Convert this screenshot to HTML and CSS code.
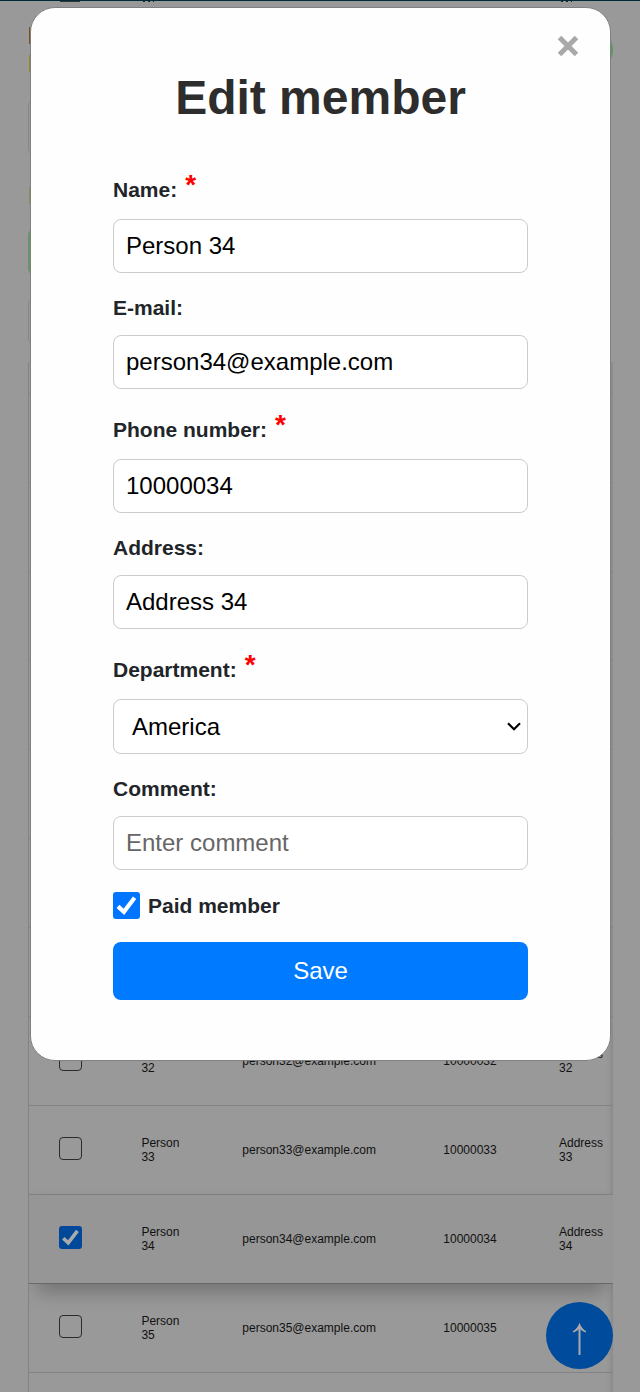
FILE: index.html
```html
<!DOCTYPE html>
<html lang="en">
<head>
<meta charset="utf-8">
<title>Edit member</title>
<link rel="stylesheet" href="styles.css">
</head>
<body>
<div class="page">
  <div class="topbar"></div>
  <div class="scrolled"><i class="edge box"></i><i class="edge digits"></i><i class="edge digits last"></i></div>
  <div class="toolbar">
    <div class="chips">
      <i class="chip orange"></i>
      <i class="chip yellow"></i>
      <i class="chip panel"></i>
      <i class="chip olive"></i>
      <i class="chip green"></i>
      <i class="chip panel-low"></i>
    </div>
    <i class="add-dot"></i>
  </div>
  <div class="table">
    <div class="thead"></div>
    <div class="row"></div><div class="row"></div><div class="row"></div><div class="row"></div><div class="row"></div><div class="row"></div><div class="row"></div>
    <div class="row"><i class="check"></i><span>Person<br>32</span><span>person32@example.com</span><span>10000032</span><span>Address<br>32</span></div>
    <div class="row"><i class="check"></i><span>Person<br>33</span><span>person33@example.com</span><span>10000033</span><span>Address<br>33</span></div>
    <div class="row selected"><i class="check on"><svg viewBox="0 0 27 27"><path d="M5 14.4L10.9 19.8L21.6 5.8" /></svg></i><span>Person<br>34</span><span>person34@example.com</span><span>10000034</span><span>Address<br>34</span></div>
    <div class="row"><i class="check"></i><span>Person<br>35</span><span>person35@example.com</span><span>10000035</span><span></span></div>
    <div class="row"></div>
  </div>
  <div class="to-top"><svg viewBox="0 0 67 67"><path d="M33.5 53V24" /><path class="head" d="M33.5 20.8C32.2 25 30 27.3 26.8 29.2L27.2 30.4C30 29.6 32 28.2 33.5 26.2C35 28.2 37 29.6 39.8 30.4L40.2 29.2C37 27.3 34.8 25 33.5 20.8Z" /></svg></div>
</div>

<div class="modal">
  <div class="close"><svg viewBox="0 0 22 22"><path d="M2.5 2.5L19.5 19.5M19.5 2.5L2.5 19.5" /></svg></div>
  <h1 class="title">Edit member</h1>
  <form class="form">
    <label class="label required first" for="name">Name:<b class="star">*</b></label>
    <input class="input" id="name" value="Person 34">
    <label class="label" for="email">E-mail:</label>
    <input class="input" id="email" value="person34@example.com">
    <label class="label required" for="phone">Phone number:<b class="star">*</b></label>
    <input class="input" id="phone" value="10000034">
    <label class="label" for="address">Address:</label>
    <input class="input" id="address" value="Address 34">
    <label class="label required" for="department">Department:<b class="star">*</b></label>
    <div class="input select" id="department"><span>America</span><svg viewBox="0 0 14 9"><path d="M1 1.2L7 7.2L13 1.2" /></svg></div>
    <label class="label" for="comment">Comment:</label>
    <input class="input" id="comment" placeholder="Enter comment">
    <div class="paid"><i class="paid-check"><svg viewBox="0 0 27 27"><path d="M5 14.4L10.9 19.8L21.6 5.8" /></svg></i><span>Paid member</span></div>
    <button class="save" type="button">Save</button>
  </form>
</div>
</body>
</html>
```

FILE: styles.css
```css
* { box-sizing: border-box; }
body { margin: 0; background: #999; font-family: "Liberation Sans", Arial, sans-serif; }
.page { position: relative; width: 640px; height: 1392px; overflow: hidden; }
.topbar { height: 1px; background: #002b36; }
.scrolled { display: flex; height: 1px; padding-left: 60px; }
.edge { height: 1px; background: #333; }
.edge.box { width: 20px; }
.edge.digits { width: 11px; margin-left: 63px; background: repeating-linear-gradient(90deg, #222 0 2px, #999 2px 5px); }
.edge.last { margin-left: 407px; }
.toolbar { display: flex; justify-content: space-between; height: 360px; padding: 25px 27px 0 28px; }
.chips { display: flex; flex-direction: column; }
.chip { display: block; width: 40px; border-left: 1px solid #858585; }
.chip.orange { height: 17px; margin-left: 1px; border-color: #7d4a1a; }
.chip.yellow { height: 17px; margin: 11px 0 0 1px; border-color: #99852c; }
.chip.panel { height: 55px; margin-top: 28px; border-radius: 6px; }
.chip.olive { height: 17px; margin: 32px 0 0 1px; border-color: #8f8b55; }
.chip.green { height: 46px; margin-top: 25px; border-left: 2px solid #699369; border-radius: 6px; }
.chip.panel-low { height: 46px; margin-top: 23px; border-radius: 6px; }
.add-dot { width: 46px; height: 46px; border-radius: 50%; background: #5c965f; }
.table { width: 585px; margin-left: 28px; border-left: 1px solid #808388; background: #999; box-shadow: inset -5px 0 6px -4px rgba(0,0,0,.16); }
.thead { height: 32px; border-bottom: 1px solid #808388; }
.row { display: grid; grid-template-columns: 112px 101px 201px 116px 54px; align-items: center; height: 89px; border-bottom: 1px solid #808388; font-size: 12px; line-height: 14px; color: #111; }
.row > span:nth-child(2) { padding-left: .4px; }
.row > span:nth-child(3), .row > span:nth-child(4) { padding: 0 0 1px .3px; }
.check { display: block; width: 23px; height: 23px; margin: 0 0 3px 30px; border: 1px solid #2b2b2b; border-radius: 4px; }
.check.on { border: 0; border-radius: 3px; background: #004899; }
.check svg { display: block; width: 23px; height: 23px; }
.check path { fill: none; stroke: #aaa; stroke-width: 4.2; }
.selected { position: relative; background: #969696; border-color: #686868; box-shadow: 0 16px 18px -8px rgba(0,0,0,.25), 0 -3px 10px -5px rgba(0,0,0,.08); clip-path: inset(-20px 0 -40px 0); }
.to-top { position: absolute; left: 546px; top: 1302px; width: 67px; height: 67px; border-radius: 50%; background: #004b9b; }
.to-top svg { display: block; }
.to-top path { fill: none; stroke: #aaa; stroke-width: 2; }
.to-top .head { fill: #aaa; stroke: none; }
.modal { position: absolute; left: 30px; top: 7px; width: 581px; height: 1054px; padding: 0 82px; border: 1px solid #808080; border-radius: 25px; background: #fefefe; }
.close { display: flex; justify-content: flex-end; height: 59px; padding: 27px 31px 0 0; margin-right: -82px; }
.close svg { width: 22px; height: 22px; }
.close path { fill: none; stroke: #a9a9a9; stroke-width: 5; }
.title { margin: 0; height: 97px; font-size: 48px; line-height: 62px; text-align: center; color: #2d2d2d; white-space: nowrap; }
.form { display: flex; flex-direction: column; }
.label { display: flex; align-items: flex-end; height: 62px; padding-bottom: 15px; font-size: 21px; line-height: 24px; font-weight: bold; color: #212529; white-space: nowrap; }
.label.required { height: 70px; padding-bottom: 17px; }
.label.first { height: 55px; }
.star { margin: 0 0 3px 8px; font-size: 28px; line-height: 28px; color: #f00; }
.input { width: 415px; height: 54px; padding: 0 12px; border: 1px solid #ccc; border-radius: 8px; background: #fff; font-family: inherit; font-size: 24px; color: #000; outline: 0; }
.input::placeholder { color: #666; opacity: 1; }
.select { display: flex; align-items: center; justify-content: space-between; height: 55px; padding: 0 6px 0 18px; }
.select svg { width: 14px; height: 9px; }
.select path { fill: none; stroke: #000; stroke-width: 2.2; }
.paid { display: flex; align-items: center; gap: 8px; height: 27px; margin: 22px 0 23px; font-size: 21px; font-weight: bold; color: #212529; }
.paid-check { width: 27px; height: 27px; border-radius: 3px; background: #0075ff; }
.paid-check svg { display: block; }
.paid-check path { fill: none; stroke: #fff; stroke-width: 4.2; }
.save { height: 58px; padding: 0; border: 0; border-radius: 8px; background: #007bff; color: #fff; font-family: inherit; font-size: 24px; }
```
